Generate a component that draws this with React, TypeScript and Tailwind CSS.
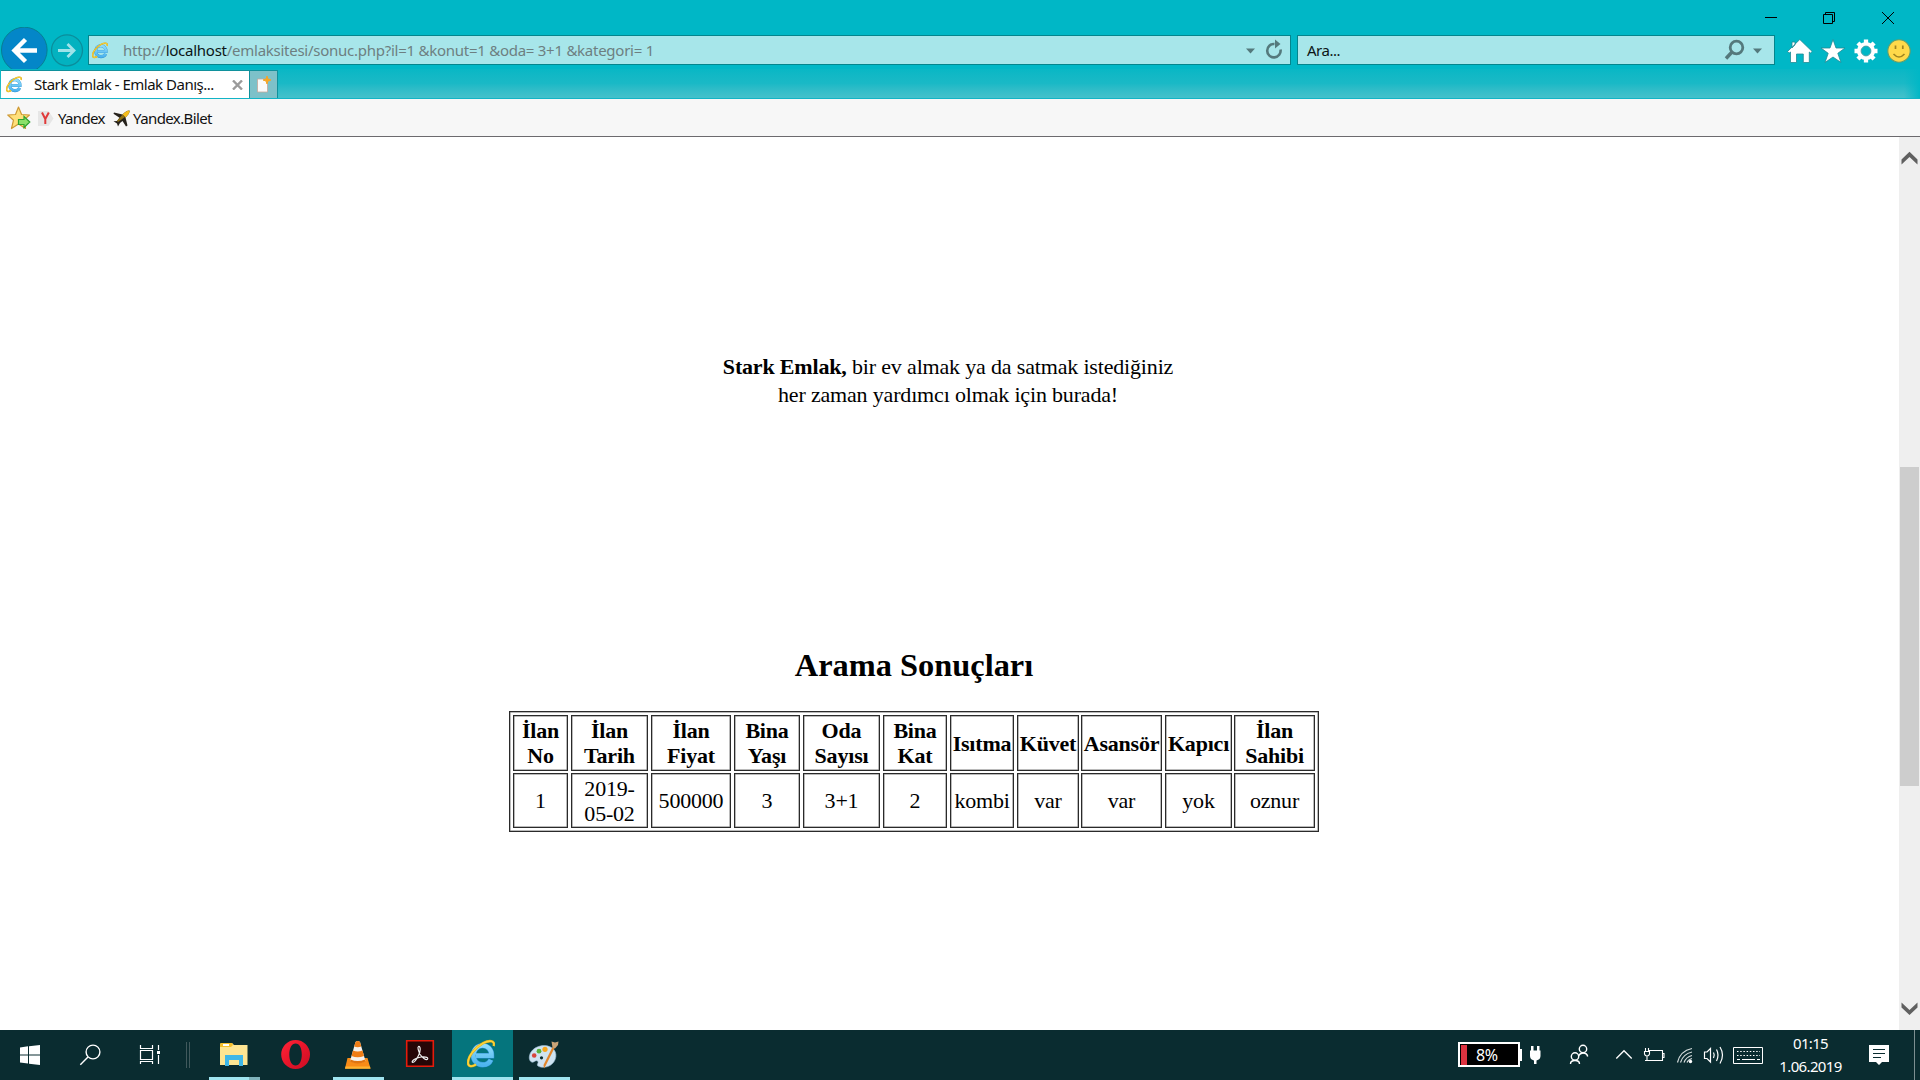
import React from "react";

function IeIcon({ className }: { className: string }) {
  return (
    <svg viewBox="0 0 28 30" className={className} fill="none">
      <defs>
        <linearGradient id="ieBlue" x1="0" y1="0" x2="0" y2="1">
          <stop offset="0" stopColor="#8fdcfb" />
          <stop offset="1" stopColor="#4db4ee" />
        </linearGradient>
      </defs>
      <path d="M9 16.800H24.600C24.800 10.500 20.500 6.600 15.600 6.600C10 6.600 6.400 11 6.400 16.400C6.400 22 10.500 25.800 15.600 25.800C19.500 25.800 22.600 23.800 23.900 20.800" stroke="#2b8fd0" strokeWidth="5.400" />
      <path d="M9 16.800H24.600C24.800 10.500 20.500 6.600 15.600 6.600C10 6.600 6.400 11 6.400 16.400C6.400 22 10.500 25.800 15.600 25.800C19.500 25.800 22.600 23.800 23.900 20.800" stroke="url(#ieBlue)" strokeWidth="4.400" />
      <path d="M26.600 7C28.500 1.500 22.500 .8 16 4.200C8 8.500 .8 17.500 1 24C1.200 28 5 28 9 25.600" stroke="#d9a514" strokeWidth="2.600" />
      <path d="M26.600 7C28.500 1.500 22.500 .8 16 4.200C8 8.500 .8 17.500 1 24C1.200 28 5 28 9 25.600" stroke="#fbd43a" strokeWidth="1.700" />
    </svg>
  );
}

function TitleBar() {
  return (
    <div className="flex h-[27px] justify-end">
      <svg className="h-[27px] w-[170px]" viewBox="0 0 170 27" fill="none" stroke="#000" strokeWidth="1">
        <path d="M15 17.500H27" />
        <path d="M73.500 14.500H82.500V23.500H73.500Z M75.500 14V12.500H84.500V21.500H83" />
        <path d="M132 12L144 24M144 12L132 24" />
      </svg>
    </div>
  );
}

function AddressRow() {
  return (
    <div className="flex h-[42px] overflow-hidden">
      <svg className="h-[42px] w-[88px] shrink-0" viewBox="0 0 88 42" fill="none">
        <circle cx="24.300" cy="23" r="22.800" fill="#0486c8" stroke="#067f92" />
        <path d="M37 23.500H15M25.500 12.500L14.500 23.500L25.500 34.500" stroke="#fff" strokeWidth="4.400" />
        <circle cx="67" cy="23.300" r="15.500" fill="#03b2c0" stroke="#0b8d9b" strokeWidth="1.300" />
        <path d="M58 23.500H74M67.500 17L74 23.500L67.500 30" stroke="#9fe3e9" strokeWidth="2.800" />
      </svg>
      <div className="mt-2 flex h-[30px] w-[1203px] shrink-0 items-center border border-[#04858d] bg-[#a7e6ea]">
        <IeIcon className="ml-[3px] h-[17px] w-[16px]" />
        <span className="ml-[15px] w-[1100px] whitespace-pre text-[15px] leading-none tracking-[-0.26px] text-[#6d7f81]">
          http://<span className="text-[#0c1516]">localhost</span>/emlaksitesi/sonuc.php?il=1 &amp;konut=1 &amp;oda= 3+1 &amp;kategori= 1
        </span>
        <svg className="ml-auto mr-[7px] h-[22px] w-[38px]" viewBox="0 0 38 22" fill="none">
          <path d="M1 9.500H10L5.500 14.500Z" fill="#54797c" />
          <path d="M35.500 10.500A6.700 6.700 0 1 1 29.500 5" stroke="#54797c" strokeWidth="2.600" />
          <path d="M30 .5L35.500 5L30 9.500Z" fill="#54797c" />
        </svg>
      </div>
      <div className="ml-1.5 mt-2 flex h-[30px] w-[478px] shrink-0 items-center border border-[#04858d] bg-[#a7e6ea]">
        <span className="ml-[9px] text-[15px] leading-none tracking-[-0.5px] text-[#0c1516]">Ara...</span>
        <svg className="ml-auto mr-[12px] h-[22px] w-[38px]" viewBox="0 0 38 22" fill="none">
          <circle cx="12.500" cy="8.500" r="6.300" stroke="#54797c" strokeWidth="2.800" />
          <path d="M8 13L2 19.500" stroke="#54797c" strokeWidth="3.400" />
          <path d="M29 9.500H38L33.500 14.500Z" fill="#54797c" />
        </svg>
      </div>
      <svg className="h-[42px] w-[145px] shrink-0" viewBox="0 0 145 42">
        <path d="M12.500 24.500L24.800 12.500L37.200 24.500L35.500 26L34.300 25V35.500H28.300V27H21.500V35.500H15.500V25L14.200 26Z M17 15H20V18L17 21Z" fill="#fff" stroke="#1f8a94" strokeWidth=".8" />
        <path d="M58 12.500L61 21H70L62.800 26.300L66 35.500L58 30L50 35.500L53.200 26.300L46 21H55Z" fill="#fff" stroke="#1f8a94" strokeWidth=".8" />
        <g transform="translate(91 24)">
          <circle r="6.900" fill="none" stroke="#fff" strokeWidth="4.400" />
          <path d="M0-11.500V-8M0 8V11.500M-11.500 0H-8M8 0H11.500M-8.100-8.100L-5.700-5.700M8.100 8.100L5.700 5.700M-8.100 8.100L-5.700 5.700M8.100-8.100L5.700-5.700" stroke="#fff" strokeWidth="4.300" />
          <circle r="4.900" fill="none" stroke="#1f8a94" strokeWidth=".8" />
        </g>
        <circle cx="124" cy="24" r="11.200" fill="#ffd94a" stroke="#5f9d6e" strokeWidth="1.100" />
        <path d="M120.500 18.500V22M127.800 18.500V22" stroke="#a08420" strokeWidth="1.700" />
        <path d="M118.500 27Q124 33 129.500 27" fill="none" stroke="#a08420" strokeWidth="1.500" />
      </svg>
    </div>
  );
}

function TabRow() {
  return (
    <div className="flex h-[30px] border-b border-[#12b4c6] bg-gradient-to-b from-[#08b7c5] via-[#1ab9c6] to-[#43c1cb]">
      <div className="ml-px mt-px flex w-[249px] items-center border-r border-t border-[#10919c] bg-white">
        <IeIcon className="ml-[5px] h-[17px] w-[16px]" />
        <span className="ml-3 w-[190px] whitespace-nowrap text-[15px] leading-none tracking-[-0.5px] text-[#111]">
          Stark Emlak - Emlak Danış...
        </span>
        <svg className="ml-[8px] h-[10px] w-[11px] shrink-0" viewBox="0 0 11 10">
          <path d="M1 .5L10 9.500M10 .5L1 9.500" stroke="#9b9b9b" strokeWidth="2.400" />
        </svg>
      </div>
      <div className="mt-px flex w-[28px] items-center border-r border-t border-[#10919c] bg-[#7dc1c9]">
        <svg className="ml-1.5 h-[17px] w-[16px]" viewBox="0 0 16 17">
          <path d="M1.500 3H11.500V16H1.500Z" fill="#fafafa" stroke="#c7a79a" strokeWidth=".8" />
          <path d="M11 0L12 3L15 4L12 5L11 8L10 5L7 4L10 3Z" fill="#fba81c" stroke="#f3a52b" />
        </svg>
      </div>
      <div className="ml-auto w-4 bg-gradient-to-r from-transparent to-[#00b7c6]" />
    </div>
  );
}

function FavoritesBar() {
  return (
    <div className="flex h-[38px] items-center border-b border-[#6c6a6e] bg-[#f7f7f7] pt-px text-[15px] leading-none text-[#111]">
      <svg className="ml-[7px] h-6 w-6" viewBox="0 0 24 24">
        <path d="M11.500 1L14.600 8.500L22.500 9L16.500 14.200L18.500 22.500L11.500 18L4.500 22.500L6.500 14.200L.8 9L8.500 8.500Z" fill="#ffe07a" stroke="#cf9a35" strokeWidth="1.200" strokeLinejoin="round" />
        <path d="M11.500 13.500H17V10.500L22.800 16L17 21.500V18.500H11.500Z" fill="#8be06a" stroke="#2fa32f" strokeWidth="1.200" />
      </svg>
      <svg className="ml-[7px] h-[17px] w-4" viewBox="0 0 16 17">
        <path d="M0 1H10.500L15.500 8.500L10.500 16H0Z" fill="#e6e6e6" />
        <path d="M4 2.500L7.300 9V14M10.800 2.500L7.300 9" fill="none" stroke="#e03a3a" strokeWidth="2" />
      </svg>
      <span className="ml-1 w-[49px] tracking-[-0.65px]">Yandex</span>
      <svg className="ml-[6px] h-[17px] w-[17px]" viewBox="0 0 17 17">
        <path d="M16.500 .5C14 .5 11.500 2.500 9.500 4.500L1 2.500L.5 3.800L6.500 7.800L4 11L.5 11.300L4 13.500L5 16.500L7 13L9.500 11L13 16.500L14.500 15.500L12.500 7.500C14.500 5.500 17 3 16.500 .5Z" fill="#26221c" />
        <path d="M16.500 .5C14 .5 11.500 2.500 9.500 4.500L12.500 7.500C14.500 5.500 17 3 16.500 .5Z" fill="#f6bd1a" />
        <path d="M9.500 4.500L4 11L5 12L12 7Z" fill="#8c6f14" />
      </svg>
      <span className="ml-[3px] tracking-[-0.6px]">Yandex.Bilet</span>
    </div>
  );
}

const cell = "flex items-center justify-center border-[1.500px] border-[#2a2a2a] text-center shadow-[inset_0_0_0_0.5px_#777]";

const columns = [
  { head: "İlan\nNo", value: "1", gap: "mr-[3px]" },
  { head: "İlan\nTarih", value: "2019-\n05-02", gap: "mr-[3px]" },
  { head: "İlan\nFiyat", value: "500000", gap: "mr-[3px]" },
  { head: "Bina\nYaşı", value: "3", gap: "mr-[3px]" },
  { head: "Oda\nSayısı", value: "3+1", gap: "mr-[3px]" },
  { head: "Bina\nKat", value: "2", gap: "mr-[3px]" },
  { head: "Isıtma", value: "kombi", gap: "mr-[3px]" },
  { head: "Küvet", value: "var", gap: "mr-[2px]" },
  { head: "Asansör", value: "var", gap: "mr-[3px]" },
  { head: "Kapıcı", value: "yok", gap: "mr-[2px]" },
  { head: "İlan\nSahibi", value: "oznur", gap: "" },
];

function ResultsTable() {
  return (
    <div className="ml-[509px] mt-[24px] grid h-[121px] w-[810px] grid-cols-[58px_80px_83px_69px_80px_67px_67px_64px_84px_69px_81px] grid-rows-[56px_55px] gap-y-[2px] border border-[#2a2a2a] p-[3px] text-[22px] leading-[25px] tracking-[-0.2px] shadow-[inset_0_0_0_0.5px_#777]">
      {columns.map((c, i) => (
        <div key={i} className={`${cell} ${c.gap} whitespace-pre font-bold`}>{c.head}</div>
      ))}
      {columns.map((c, i) => (
        <div key={i} className={`${cell} ${c.gap} whitespace-pre`}>{c.value}</div>
      ))}
    </div>
  );
}

function PageContent() {
  return (
    <div className="flex h-[893px] bg-white">
      <main className="w-[1899px] font-['Liberation_Serif',serif] text-black">
        <p className="ml-[648px] mt-[216px] w-[600px] text-center text-[22px] leading-[28px] tracking-[-0.17px]">
          <b>Stark Emlak,</b> bir ev almak ya da satmak istediğiniz
          <br />
          her zaman yardımcı olmak için burada!
        </p>
        <h1 className="ml-[509px] mt-[235px] w-[810px] text-center text-[32.400px] font-bold leading-[43px]">Arama Sonuçları</h1>
        <ResultsTable />
      </main>
      <div className="flex w-[21px] flex-col items-center bg-[#efefef]">
        <svg className="mt-[14px] h-[15px] w-[17px]" viewBox="0 0 17 15">
          <path d="M.5 13.500V8.500L8.500 .8L16.500 8.500V13.500L8.500 6Z" fill="#606060" />
        </svg>
        <div className="mt-[301px] h-[319px] w-[19px] bg-[#cdcdcd]" />
        <svg className="mt-[215px] h-[15px] w-[17px]" viewBox="0 0 17 15">
          <path d="M.5 1.500V6.500L8.500 14L16.500 6.500V1.500L8.500 9Z" fill="#606060" />
        </svg>
      </div>
    </div>
  );
}

function Taskbar() {
  return (
    <div className="flex h-[50px] bg-[#0a2c30] text-white">
      <svg className="h-[50px] w-[60px]" viewBox="0 0 60 50" fill="#fff">
        <path d="M20 17.500L28 16.300V24.400H20ZM29 16.200L40 15V24.400H29ZM20 25.500H28V33.600L20 32.500ZM29 25.500H40V35L29 33.800Z" />
      </svg>
      <svg className="h-[50px] w-[60px]" viewBox="0 0 60 50" fill="none" stroke="#fff" strokeWidth="1.400">
        <circle cx="33" cy="22" r="6.900" />
        <path d="M28 27L20.300 34.700" />
      </svg>
      <svg className="h-[50px] w-[64px]" viewBox="0 0 64 50" fill="none" stroke="#fff" strokeWidth="1.200">
        <path d="M20.500 15V18.500H32.500V15M20.500 20.500H32.500V29.500H20.500ZM20.500 34V31.500H32.500V34M38.500 15V20M38.500 25V34" />
        <path d="M37 21H40V24H37Z" fill="#fff" stroke="none" />
      </svg>
      <div className="flex w-5 items-center gap-[2px] pl-[2px]">
        <div className="h-[26px] w-px bg-[#41595c]" />
        <div className="h-[26px] w-px bg-[#41595c]" />
      </div>
      <svg className="h-[50px] w-[60px]" viewBox="0 0 60 50">
        <path d="M16 14.500Q16 13 17.500 13H28L30 15H43.500V35H16Z" fill="#fee592" />
        <path d="M16 14.500Q16 13 17.500 13H28L29 15L27 17H16Z" fill="#f5bf2c" />
        <path d="M19 14H25V16H19Z" fill="#fff" />
        <path d="M21 36V25H39V36H35V30H25V36Z" fill="#3fb7e8" />
        <path d="M5 47H45V50H5Z" fill="#a0e4ef" />
        <path d="M45 47H56V50H45Z" fill="#80b3bb" />
      </svg>
      <svg className="h-[50px] w-[62px]" viewBox="0 0 62 50">
        <defs>
          <linearGradient id="operaRed" x1="0" y1="0" x2="1" y2="1">
            <stop offset="0" stopColor="#ff2438" />
            <stop offset=".5" stopColor="#e9152a" />
            <stop offset="1" stopColor="#c80e24" />
          </linearGradient>
        </defs>
        <path fillRule="evenodd" d="M31.600 10A14.400 14.500 0 1 0 31.600 39A14.400 14.500 0 1 0 31.600 10ZM31.600 13.500C35.500 13.500 37.800 18 37.800 24.500S35.500 35.500 31.600 35.500S25.300 31 25.300 24.500S27.700 13.500 31.600 13.500Z" fill="url(#operaRed)" />
      </svg>
      <svg className="h-[50px] w-[64px]" viewBox="0 0 64 50">
        <path d="M21.500 28H41.500L44.500 38.500H19Z" fill="#f88b17" />
        <path d="M19.500 36.500H44L44.500 38.800H19Z" fill="#ffb331" />
        <path d="M29.500 12Q31.700 10 34 12L39.500 31Q31.700 35 24 31Z" fill="#f5f2ee" />
        <path d="M29.500 12Q31.700 10 34 12L35.300 16.500Q31.700 18 28.200 16.500ZM27 20.500Q31.700 22.500 36.500 20.500L38 26Q31.700 28.500 25.500 26Z" fill="#ee7d16" />
        <path d="M24.500 29.500Q31.700 32.500 39 29.500L39.500 31.500Q31.700 35.500 24 31.500Z" fill="#df7411" />
        <path d="M7 47H58V50H7Z" fill="#a0e4ef" />
      </svg>
      <svg className="h-[50px] w-[62px]" viewBox="0 0 62 50">
        <path d="M16.700 10.700H43.300V36.300H16.700Z" fill="#260607" stroke="#e51b0b" strokeWidth="1.600" />
        <path d="M28.500 16.500C31 16 30.500 22 28.500 25.500C26.500 29.500 24 33 22.300 32.300C21.500 31 25 28 31 27C36.500 26.200 38.500 28 37.500 29.200C36 30.500 32 27.500 30.200 24.500C28.300 21 27.300 17 28.500 16.500Z" fill="none" stroke="#eee" strokeWidth="1.200" />
      </svg>
      <div className="flex w-[61px] border-b-[3px] border-[#a0e4ef] bg-[#05757d]">
        <IeIcon className="ml-[15px] mt-[9px] h-[30px] w-[28px]" />
      </div>
      <svg className="h-[50px] w-[63px]" viewBox="0 0 63 50">
        <path d="M18 22C22 16 31 14 37.500 17C44 20 44.500 28 40 33C36 37.500 29 38.500 25 36C23 34.500 26.500 32.500 24.500 31C22 29.500 20.500 34 17.800 31.500C15.500 29.500 16 25 18 22Z" fill="#cfe3f1" stroke="#9bbdd4" strokeWidth=".6" />
        <circle cx="21.200" cy="25.500" r="2.300" fill="#d9453c" />
        <circle cx="26" cy="21.200" r="2.400" fill="#59b13b" />
        <circle cx="32" cy="19.300" r="2.600" fill="#f7a61d" />
        <circle cx="28.500" cy="27.800" r="1.600" fill="#0a2c30" />
        <path d="M32.500 36L31 38.500L30.500 35L39.500 17L41.500 18Z" fill="#e2862c" />
        <path d="M39.500 17.500L38.500 11.500L42 12.500L45.500 11.500L45 15L42 18.500Z" fill="#c9a477" />
        <path d="M6 47H57V50H6Z" fill="#a0e4ef" />
      </svg>
      <div className="ml-auto mt-3 flex h-[25px] w-[62px] items-center border-2 border-white bg-black text-[16px]">
        <div className="ml-px h-[20px] w-[6px] bg-[#dc3340]" />
        <span className="ml-[9px] leading-none tracking-[-0.4px]">8%</span>
      </div>
      <svg className="h-[50px] w-[36px]" viewBox="0 0 36 50" fill="#fff">
        <path d="M0 19H2V31H0ZM11 16H13.500V20.500H17V16H19.500V20.500H20.500V26Q20.500 29.500 16.500 30.500V34H14V30.500Q10 29.500 10 26V20.500H11Z" />
      </svg>
      <svg className="h-[50px] w-[45px]" viewBox="0 0 45 50" fill="none" stroke="#fff" strokeWidth="1.400">
        <circle cx="27" cy="19" r="3.700" />
        <circle cx="19" cy="26.500" r="3.700" />
        <path d="M14.500 34Q14.500 30.500 19 30.500T23.500 34M22.500 26Q24 23 27 23Q31 23 31.700 26.500" />
      </svg>
      <svg className="h-[50px] w-[38px]" viewBox="0 0 38 50" fill="none" stroke="#fff" strokeWidth="1.300">
        <path d="M15.300 28.500L23 20.700L30.700 28.500" />
      </svg>
      <svg className="h-[50px] w-[32px]" viewBox="0 0 32 50" fill="none" stroke="#fff" strokeWidth="1.100">
        <path d="M10 20.500H23.500V30.500H8.500M24 23.500H25V27.500H24M6.500 18V21M9.500 18V21M5.500 21.500H10.500V24Q10 26 8 26Q6 26 5.500 24ZM8 26V30.500H6" />
      </svg>
      <svg className="mr-px h-[50px] w-[28px]" viewBox="0 0 28 50" fill="none" stroke="#d5dcdc" strokeWidth="1.200">
        <path d="M6.500 32.500Q9 21 21 18.500M9.500 32.500Q12 24 21 22M13 32.500Q15 27 21 25.500M16 32.500Q17 29.500 21 28.500" />
        <circle cx="19.500" cy="31.500" r="1.700" fill="#fff" stroke="none" />
      </svg>
      <svg className="h-[50px] w-[29px]" viewBox="0 0 29 50" fill="none" stroke="#fff" strokeWidth="1.200">
        <path d="M4.500 22H7L10.500 18.500V32L7 28.500H4.500ZM13.500 22.500Q15 25 13.500 28M16.500 19.500Q19.500 25 16.500 31M20 17Q25 25 20 33.500" />
      </svg>
      <svg className="mr-1 h-[50px] w-[39px]" viewBox="0 0 39 50" fill="none" stroke="#fff" strokeWidth="1">
        <path d="M4.500 17.500H33.500V33.500H4.500Z" />
        <path d="M8 21.500H31M8 25.500H31" strokeDasharray="1.500 1.700" />
        <path d="M8 29.500H11M13 29.500H26M28 29.500H31" />
      </svg>
      <div className="mr-px flex w-[77px] flex-col items-center pt-[2px] text-[15px] leading-[23px] tracking-[-0.65px]">
        <span>01:15</span>
        <span>1.06.2019</span>
      </div>
      <svg className="h-[50px] w-[64px]" viewBox="0 0 64 50">
        <path d="M19 15H39V32H32L29 35L26 32H19Z" fill="#fff" />
        <path d="M23 19.500H35M23 23.500H35M23 27.500H31" stroke="#0a2c30" />
      </svg>
      <div className="w-[6px] border-l border-[#7c8f91]" />
    </div>
  );
}

export default function App() {
  return (
    <div className="flex h-[1080px] w-[1920px] flex-col overflow-hidden bg-[#00b7c6] font-['Noto_Sans',sans-serif]">
      <TitleBar />
      <AddressRow />
      <TabRow />
      <FavoritesBar />
      <PageContent />
      <Taskbar />
    </div>
  );
}
